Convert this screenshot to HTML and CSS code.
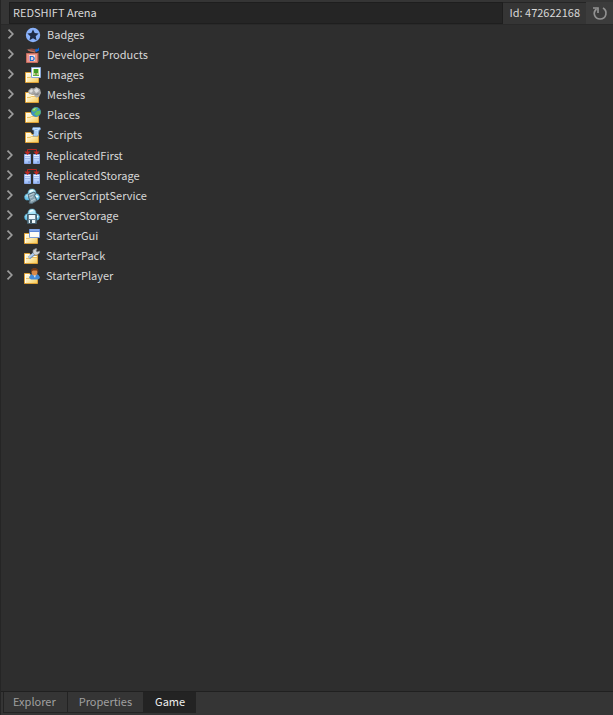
FILE: index.html
```html
<!DOCTYPE html>
<html lang="en">
<head>
<meta charset="utf-8">
<title>REDSHIFT Arena</title>
<link rel="stylesheet" href="styles.css">
</head>
<body>
<svg class="defs" aria-hidden="true">
  <defs>
    <linearGradient id="gold" x1="0" y1="0" x2="1" y2="1"><stop offset="0" stop-color="#fffbe6"/><stop offset=".5" stop-color="#fdebb4"/><stop offset="1" stop-color="#f5c850"/></linearGradient>
    <linearGradient id="sky" x1="0" y1="0" x2="0" y2="1"><stop offset="0" stop-color="#d4f8ff"/><stop offset="1" stop-color="#5fc0e8"/></linearGradient>
    <linearGradient id="server" x1="0" y1="0" x2="0" y2="1"><stop offset="0" stop-color="#f4f8ff"/><stop offset="1" stop-color="#92b6fa"/></linearGradient>
    <symbol id="chevron" viewBox="0 0 8 10"><path d="M1.500 .7l4.300 4.300-4.300 4.300" fill="none" stroke="#9c9c9c" stroke-width="1.700"/></symbol>
    <symbol id="folder" viewBox="0 0 16 16"><path d="M.5 15.500v-10h5l1.500 2h6.500v8z" fill="url(#gold)" stroke="#dfa236"/><path d="M1.500 15V6.500H5l1 2h6.500" fill="none" stroke="#fffbea"/><path d="M2 10.500h3l1.500-1H13" fill="none" stroke="#e8b750" stroke-width=".8"/></symbol>
    <symbol id="badge" viewBox="0 0 16 16"><circle cx="8" cy="8" r="7.200" fill="#89b1fa"/><path d="M8 2.500l1.700 3.600 3.900.5-2.900 2.700.8 3.900L8 11.300l-3.500 1.900.8-3.900-2.900-2.700 3.900-.5z" fill="#202c46"/></symbol>
    <symbol id="product" viewBox="0 0 16 16"><path d="M1.500 2.500l5-1 5 1-1 3-5-.5z" fill="#8c4e43"/><path d="M3 3l7 2" stroke="#bd7969"/><path d="M10 4l1-2.500 1 1L14 .5v3L11.500 5z" fill="#0869df"/><path d="M2 6.500h10l1.500-1v9l-1 1H2z" fill="#b9675b"/><path d="M1.500 6.500h11v9h-11z" fill="#e99788" stroke="#c76b60"/><path d="M4 8h6v6H4z" fill="#f4d9dc"/><text x="4" y="14" class="product-letter">D</text></symbol>
    <symbol id="image" viewBox="0 0 16 16"><use href="#folder"/><path d="M6.500.5h9v10h-9z" fill="#fbfdff" stroke="#8ba9d8"/><path d="M8 2h6v6H8z" fill="#b6dc91"/><path d="M9 2h4v4H9z" fill="#3f9b24"/><path d="M10.500 6h1v2h-1z" fill="#795730"/><path d="M8 8h6v1H8z" fill="#5fb33b"/></symbol>
    <symbol id="mesh" viewBox="0 0 16 16"><use href="#folder"/><path d="M3 4l3-3 3 .5L11 0l4 2 1 4-2 4-3 .5L9 8 4 7z" fill="#aaa"/><path d="M4 4l3-2 1 2-2 2zM9 3l3-2 2 3-3 2z" fill="#dedede"/><path d="M8 6l3 1 3-1-1 2-3-.5z" fill="#858585"/></symbol>
    <symbol id="place" viewBox="0 0 16 16"><use href="#folder"/><circle cx="11" cy="5" r="4.900" fill="#3c91c4"/><path d="M7 2.500L10 .5l3 .6-1 2.200L9 5 7 4zM12 4l3.500-.5v3L12 9l-3-2z" fill="#68c15c"/><path d="M8 2l3-.9-2 2.300z" fill="#b7edac"/></symbol>
    <symbol id="script" viewBox="0 0 16 16"><use href="#folder"/><path d="M8 .5h7q1 1 0 2.500h-1l-1 6H8l1-2V3H7.500V1.500z" fill="#c2e0ff" stroke="#719cd0" stroke-width=".8"/><path d="M9.500 2.500h3M10 5h2.500M10 7h2" stroke="#8db9ed"/></symbol>
    <symbol id="replicated" viewBox="0 0 16 16"><path d="M.5 6.500h6v9h-6zM9.500 6.500h6v9h-6z" fill="url(#server)" stroke="#8ca9e8"/><path d="M1 8.500h5M1 10.500h5M10 8.500h5M10 10.500h5" stroke="#8dabe5" stroke-width=".7"/><path d="M4.500 14h1M13.500 14h1" stroke="#35568d"/><path d="M3.500 4V1.500h9V4" fill="none" stroke="#b42722"/><path d="M.5 3.500h6L3.500 7zM9.500 3.500h6L12.500 7z" fill="#c32822"/></symbol>
    <symbol id="cloud" viewBox="0 0 16 16"><path d="M2 12Q.5 11 .5 8.500 1 6 4 5.500 4 1 8 1t4 4.500q3 .5 3.500 3 0 2.500-1.500 3.500z" fill="url(#sky)" stroke="#4aa5cc" stroke-width=".6"/><path d="M6 4q1-2 3-1.500M3 8l2-1M12 8l2 1" stroke="#f4ffff" fill="none" stroke-width="1.500"/></symbol>
    <symbol id="server-script" viewBox="0 0 16 16"><use href="#cloud"/><path d="M4 6.500l6-2.500 2 1.500-1.500 2 2.500 5-5 3-3-.5 1-2.500-1.500-3z" fill="#88a1ae" stroke="#506a78"/><path d="M5 7.500l5-2M6 10l3-1.500M7 13l4-2" stroke="#c7dbe2" stroke-width=".8"/></symbol>
    <symbol id="server-storage" viewBox="0 0 16 16"><use href="#cloud"/><path d="M3.500 6.500h9v9h-9z" fill="#688595" stroke="#46616f"/><path d="M5 7h6v4H5zM5 12h6v3H5z" fill="#ecf6fa"/><path d="M6 12h2v3H6z" fill="#405965"/></symbol>
    <symbol id="gui" viewBox="0 0 16 16"><use href="#folder"/><path d="M5.500 1.500h10v8h-10z" fill="#fffdf5" stroke="#7d9ed8"/><path d="M5 1h11v3H5z" fill="#5d87d7"/><path d="M6 2h9" stroke="#a9c7fa"/></symbol>
    <symbol id="pack" viewBox="0 0 16 16"><use href="#folder"/><path d="M5 10l6-5" stroke="#6e91bd" stroke-width="3"/><path d="M5 9.500l6-5" stroke="#b5d0f2" stroke-width="1.700"/><path d="M9 5V2l3-1.500 1 .5-1 2 1 1 2.500-1V5L13 7h-2z" fill="#d0d3d5" stroke="#858b91" stroke-width=".7"/></symbol>
    <symbol id="player" viewBox="0 0 16 16"><use href="#folder"/><path d="M5 10Q6 6 9 6h3q3 0 4 4l-2 1.500H7z" fill="#438bd8"/><path d="M9 6h3l-1 4z" fill="#e5f3ff"/><ellipse cx="10.500" cy="4" rx="3" ry="3.500" fill="#d98a49"/><path d="M7 4Q6.500 0 10.500 0t4 4l-2-1.500H9z" fill="#743815"/></symbol>
  </defs>
</svg>
<main class="panel">
  <header class="header">
    <input class="title" aria-label="Game name" value="REDSHIFT Arena">
    <span class="game-id">Id: 472622168</span>
    <button class="refresh" aria-label="Refresh"><svg viewBox="0 0 16 16"><path d="M4.500 4C0 8 3 14 8 14c6.500 0 8-8 3-11" fill="none" stroke="#929292" stroke-width="1.700"/><path d="M1 3h5v5" fill="none" stroke="#929292" stroke-width="1.700"/></svg></button>
  </header>
  <section class="content">
    <ul class="tree assets">
      <li><button class="toggle" aria-label="Expand Badges"><svg><use href="#chevron"/></svg></button><svg class="icon"><use href="#badge"/></svg><span>Badges</span></li>
      <li><button class="toggle" aria-label="Expand Developer Products"><svg><use href="#chevron"/></svg></button><svg class="icon"><use href="#product"/></svg><span>Developer Products</span></li>
      <li><button class="toggle" aria-label="Expand Images"><svg><use href="#chevron"/></svg></button><svg class="icon"><use href="#image"/></svg><span>Images</span></li>
      <li><button class="toggle" aria-label="Expand Meshes"><svg><use href="#chevron"/></svg></button><svg class="icon"><use href="#mesh"/></svg><span>Meshes</span></li>
      <li><button class="toggle" aria-label="Expand Places"><svg><use href="#chevron"/></svg></button><svg class="icon"><use href="#place"/></svg><span>Places</span></li>
      <li><i class="toggle"></i><svg class="icon"><use href="#script"/></svg><span>Scripts</span></li>
    </ul>
    <ul class="tree services">
      <li><button class="toggle" aria-label="Expand ReplicatedFirst"><svg><use href="#chevron"/></svg></button><svg class="icon"><use href="#replicated"/></svg><span>ReplicatedFirst</span></li>
      <li><button class="toggle" aria-label="Expand ReplicatedStorage"><svg><use href="#chevron"/></svg></button><svg class="icon"><use href="#replicated"/></svg><span>ReplicatedStorage</span></li>
      <li><button class="toggle" aria-label="Expand ServerScriptService"><svg><use href="#chevron"/></svg></button><svg class="icon"><use href="#server-script"/></svg><span>ServerScriptService</span></li>
      <li><button class="toggle" aria-label="Expand ServerStorage"><svg><use href="#chevron"/></svg></button><svg class="icon"><use href="#server-storage"/></svg><span>ServerStorage</span></li>
      <li><button class="toggle" aria-label="Expand StarterGui"><svg><use href="#chevron"/></svg></button><svg class="icon"><use href="#gui"/></svg><span>StarterGui</span></li>
      <li><i class="toggle"></i><svg class="icon"><use href="#pack"/></svg><span>StarterPack</span></li>
      <li><button class="toggle" aria-label="Expand StarterPlayer"><svg><use href="#chevron"/></svg></button><svg class="icon"><use href="#player"/></svg><span>StarterPlayer</span></li>
    </ul>
  </section>
  <nav class="tabs">
    <button class="tab">Explorer</button>
    <button class="tab">Properties</button>
    <button class="tab active">Game</button>
  </nav>
</main>
</body>
</html>
```
FILE: styles.css
```css
* { box-sizing: border-box; }
body { margin: 0; background: #2e2e2e; color: #d8d8d8; font: 11px/18px "Noto Sans CJK SC", "Noto Sans", sans-serif; }
button, input { font: inherit; color: inherit; border: 0; margin: 0; padding: 0; background: none; border-radius: 0; }
.defs { position: absolute; width: 0; height: 0; }
.panel { min-height: 100vh; display: flex; flex-direction: column; border-left: 1px solid #252525; }
.header { display: flex; height: 25px; padding-top: 2px; background: #353535; border-bottom: 1px solid #292929; }
.title { flex: 1; min-width: 0; margin-left: 8px; padding: 0 3px 2px; background: #252525; border: 1px solid #1e1e1e; }
.game-id { padding: 0 6px; border-top: 1px solid #252525; }
.refresh { width: 27px; display: flex; align-items: center; justify-content: center; background: #3c3c3c; }
.refresh svg { width: 16px; height: 16px; }
.content { flex: 1; }
.tree { list-style: none; margin: 0; padding: 0; }
.tree li { display: flex; align-items: center; height: 20px; }
.tree span { padding-bottom: 2px; }
.assets { padding-left: 6px; }
.services { padding: 1px 0 0 5px; }
.toggle { width: 8px; height: 12px; padding-bottom: 2px; flex: none; }
.toggle svg { display: block; width: 8px; height: 10px; }
.icon { width: 16px; height: 16px; margin: 0 6px 0 10px; flex: none; }
.product-letter { font: bold 8px "Liberation Sans", sans-serif; fill: #0862d2; }
.tabs { display: flex; height: 24px; padding: 0 0 2px 2px; background: #353535; border-top: 1px solid #202020; }
.tab { padding: 0 11px 4px 9px; color: #a0a0a0; border: 1px solid #232323; border-width: 0 0 1px 1px; }
.tab + .tab { padding-left: 11px; }
.tab.active { padding-bottom: 2px; color: #f0f0f0; background: #232323; }
```
